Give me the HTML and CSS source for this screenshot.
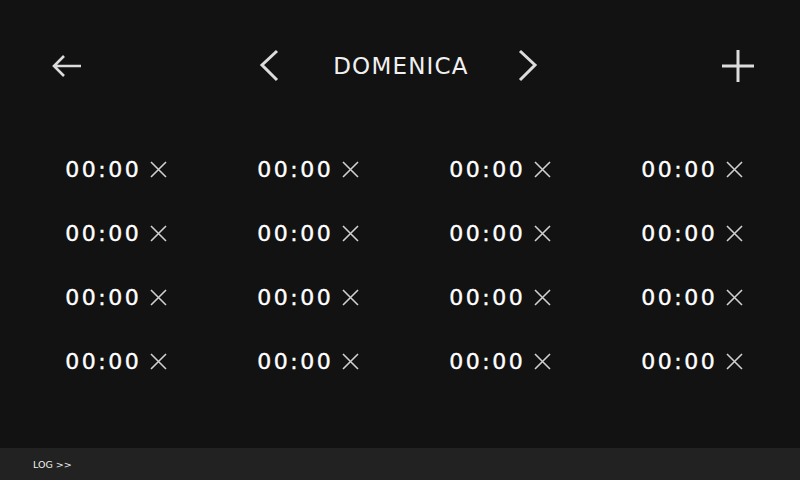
FILE: index.html
```html
<!DOCTYPE html>
<html>
<head>
<meta charset="utf-8">
<link rel="stylesheet" href="styles.css">
</head>
<body>
<div class="screen">
  <header class="top">
    <button class="icon-btn back" aria-label="back">
      <svg width="32" height="32" viewBox="0 0 32 32"><path d="M29 14H2M12 4L2 14L12 24" fill="none" stroke="#dcdcdc" stroke-width="2.6"/></svg>
    </button>
    <div class="day-nav">
      <svg width="22" height="34" viewBox="0 0 22 34"><path d="M18 2L3 16L18 31" fill="none" stroke="#dcdcdc" stroke-width="3"/></svg>
      <span class="day">DOMENICA</span>
      <svg width="22" height="34" viewBox="0 0 22 34"><path d="M3 2L18 16L3 31" fill="none" stroke="#dcdcdc" stroke-width="3"/></svg>
    </div>
    <button class="icon-btn add" aria-label="add">
      <svg width="34" height="34" viewBox="0 0 34 34"><path d="M17 1V33M1 17H33" fill="none" stroke="#dcdcdc" stroke-width="3"/></svg>
    </button>
  </header>
  <main class="grid" id="grid"></main>
  <footer class="footer"><span class="log">LOG &gt;&gt;</span></footer>
</div>
<template id="item">
  <div class="slot"><span class="time">00:00</span><svg class="x" width="17" height="17" viewBox="0 0 17 17"><path d="M1 1L16 16M16 1L1 16" fill="none" stroke="#cfcfcf" stroke-width="1.6"/></svg></div>
</template>
<script>
  var g = document.getElementById('grid');
  var t = document.getElementById('item');
  for (var i = 0; i < 16; i++) g.appendChild(t.content.cloneNode(true));
</script>
</body>
</html>
```
FILE: styles.css
```css
html, body {
  margin: 0;
  padding: 0;
  background: #121212;
}
.screen {
  width: 800px;
  height: 480px;
  display: flex;
  flex-direction: column;
  background: #121212;
  color: #fff;
  font-family: "DejaVu Sans", sans-serif;
}
.top {
  height: 132px;
  display: flex;
  align-items: flex-start;
  justify-content: space-between;
  padding: 50px 45px 0 52px;
  box-sizing: border-box;
}
.icon-btn {
  background: none;
  border: 0;
  padding: 0;
  margin: 0;
  display: flex;
}
.back { margin-top: 2px; }
.add { margin-top: -1px; }
.day-nav {
  display: flex;
  align-items: center;
  margin-top: -1px;
  margin-right: 8px;
}
.day {
  font-size: 23px;
  letter-spacing: 1.2px;
  width: 236px;
  text-align: center;
  color: #f0f0f0;
  padding-left: 5px;
  box-sizing: border-box;
}
.grid {
  flex: 1;
  display: grid;
  grid-template-columns: repeat(4, 192px);
  grid-auto-rows: 64px;
  padding: 5px 0 0 20px;
  align-content: start;
}
.slot {
  display: flex;
  align-items: center;
  justify-content: center;
  gap: 11px;
  height: 64px;
}
.time {
  font-size: 22px;
  letter-spacing: 2.5px;
  margin-right: -2.5px;
  color: #fff;
  -webkit-text-stroke: 0.4px #fff;
}
.x { display: block; }
.footer {
  height: 32px;
  background: #222222;
  display: flex;
  align-items: center;
  padding-left: 33px;
}
.log {
  font-size: 9.5px;
  color: #f0f0f0;
  letter-spacing: 0;
}
```
